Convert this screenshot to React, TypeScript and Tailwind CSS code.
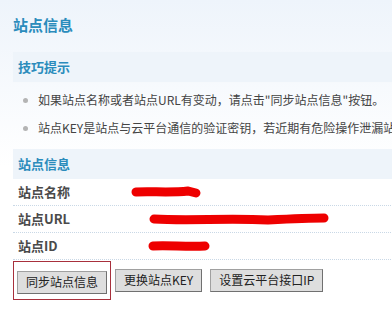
import React from 'react';

const tips = [
  '如果站点名称或者站点URL有变动，请点击"同步站点信息"按钮。',
  '站点KEY是站点与云平台通信的验证密钥，若近期有危险操作泄漏站点KEY，请点击"更换站点KEY"按钮。',
];

const rows = [
  { label: '站点名称', mark: 'M6 7 C20 6, 40 8, 58 6 L66 8', width: 72, left: 4 },
  { label: '站点URL', mark: 'M6 7 C40 9, 80 6, 120 8 C140 7, 160 6, 176 6', width: 182, left: 22 },
  { label: '站点ID', mark: 'M6 7 C20 6, 40 8, 58 7', width: 64, left: 21 },
];

// red scribble over the hidden values
function Scribble({ d, width, left }: { d: string; width: number; left: number }) {
  return (
    <svg width={width} height="14" viewBox={`0 0 ${width} 14`} style={{ marginLeft: left }}>
      <path d={d} fill="none" stroke="#ee0000" strokeWidth="9" strokeLinecap="round" />
    </svg>
  );
}

export default function App() {
  return (
    <div
      className="w-[392px] h-[334px] overflow-hidden bg-gradient-to-b from-[#eef4fb] via-white to-white pl-[13px]"
      style={{ fontFamily: '"Noto Sans CJK SC", "Noto Sans", sans-serif' }}
    >
      <h1 className="pt-[14px] h-[52px] text-[15px] font-bold text-[#2b8cbc] whitespace-nowrap">站点信息</h1>

      <div className="w-[600px]">
        <div className="h-[31px] flex items-center pl-[5px] bg-[#eef4fa] border-b border-[#f6f9fc] text-[13px] font-bold text-[#2b8cbc]">
          技巧提示
        </div>
        <ul className="pt-[3px] pb-[7px]">
          {tips.map((t, i) => (
            <li key={i} className="h-[28px] flex items-center text-[12px] text-[#444] whitespace-nowrap">
              <span className="ml-[10px] mr-[10px] w-[5px] h-[5px] rounded-full bg-[#b4b4b4]" />
              {t}
            </li>
          ))}
        </ul>

        <div className="h-[30px] flex items-center pl-[5px] bg-[#eef4fa] text-[13px] font-bold text-[#2b8cbc]">
          站点信息
        </div>
        {rows.map((r) => (
          <div
            key={r.label}
            className="h-[27px] flex items-center border-b border-dotted border-[#c9d8e6] text-[13px] font-bold text-[#4a4a4a]"
          >
            <span className="pl-[5px] w-[113px]">{r.label}</span>
            <Scribble d={r.mark} width={r.width} left={r.left} />
          </div>
        ))}

        <div className="flex items-center gap-[4px] pt-[1px]">
          <div className="border border-[#a8303c] px-[3px] pt-[6px] pb-[5px]">
            <button className="h-[23px] px-[8px] bg-[#dedede] border border-[#a0a0a0] border-r-[#707070] border-b-[#707070] text-[12px] text-[#222]">
              同步站点信息
            </button>
          </div>
          <button className="h-[23px] px-[8px] bg-[#dedede] border border-[#a0a0a0] border-r-[#707070] border-b-[#707070] text-[12px] text-[#222]">
            更换站点KEY
          </button>
          <button className="ml-[4px] h-[23px] px-[8px] bg-[#dedede] border border-[#a0a0a0] border-r-[#707070] border-b-[#707070] text-[12px] text-[#222]">
            设置云平台接口IP
          </button>
        </div>
      </div>
    </div>
  );
}
